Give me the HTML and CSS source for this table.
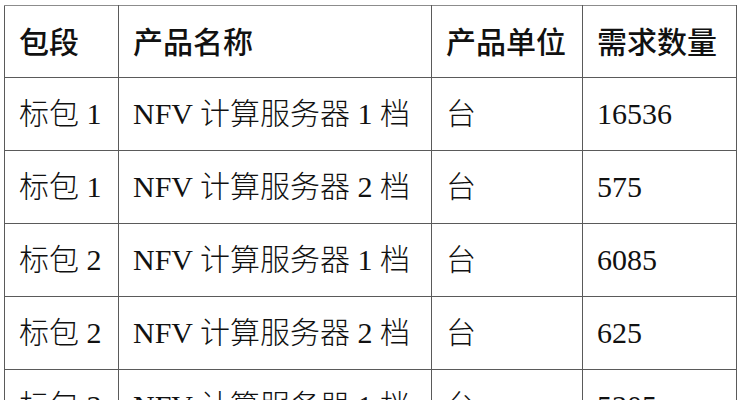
FILE: index.html
```html
<!DOCTYPE html>
<html lang="zh-CN">
<head>
<meta charset="utf-8">
<link rel="stylesheet" href="styles.css">
</head>
<body>
<div class="page">
<table class="grid">
  <colgroup>
    <col class="c1"><col class="c2"><col class="c3"><col class="c4">
  </colgroup>
  <thead>
    <tr><th>包段</th><th>产品名称</th><th>产品单位</th><th>需求数量</th></tr>
  </thead>
  <tbody>
    <tr><td>标包 1</td><td>NFV 计算服务器 1 档</td><td>台</td><td>16536</td></tr>
    <tr><td>标包 1</td><td>NFV 计算服务器 2 档</td><td>台</td><td>575</td></tr>
    <tr><td>标包 2</td><td>NFV 计算服务器 1 档</td><td>台</td><td>6085</td></tr>
    <tr><td>标包 2</td><td>NFV 计算服务器 2 档</td><td>台</td><td>625</td></tr>
    <tr><td>标包 3</td><td>NFV 计算服务器 1 档</td><td>台</td><td>5305</td></tr>
  </tbody>
</table>
</div>
</body>
</html>
```
FILE: styles.css
```css
html, body {
  margin: 0;
  padding: 0;
  background: #ffffff;
}
.page {
  padding: 5px 0 0 4px;
  overflow: hidden;
  height: 400px;
  box-sizing: border-box;
}
.grid {
  border-collapse: collapse;
  table-layout: fixed;
  width: 732px;
  color: #111111;
}
.c1 { width: 114px; }
.c2 { width: 313px; }
.c3 { width: 151px; }
.c4 { width: 154px; }
.grid th, .grid td {
  border: 1px solid #5a5a5a;
  height: 73px;
  padding: 0 0 0 14px;
  text-align: left;
  vertical-align: middle;
  font-size: 30px;
  line-height: 36px;
  white-space: nowrap;
  box-sizing: border-box;
}
.grid thead th {
  height: 72px;
  padding-bottom: 3px;
  border-top-color: #8c8c8c;
  font-family: "Noto Sans CJK SC", sans-serif;
  font-weight: 500;
}
.grid td {
  font-family: "Liberation Serif", "Noto Sans CJK SC", serif;
  font-weight: 300;
}
```
